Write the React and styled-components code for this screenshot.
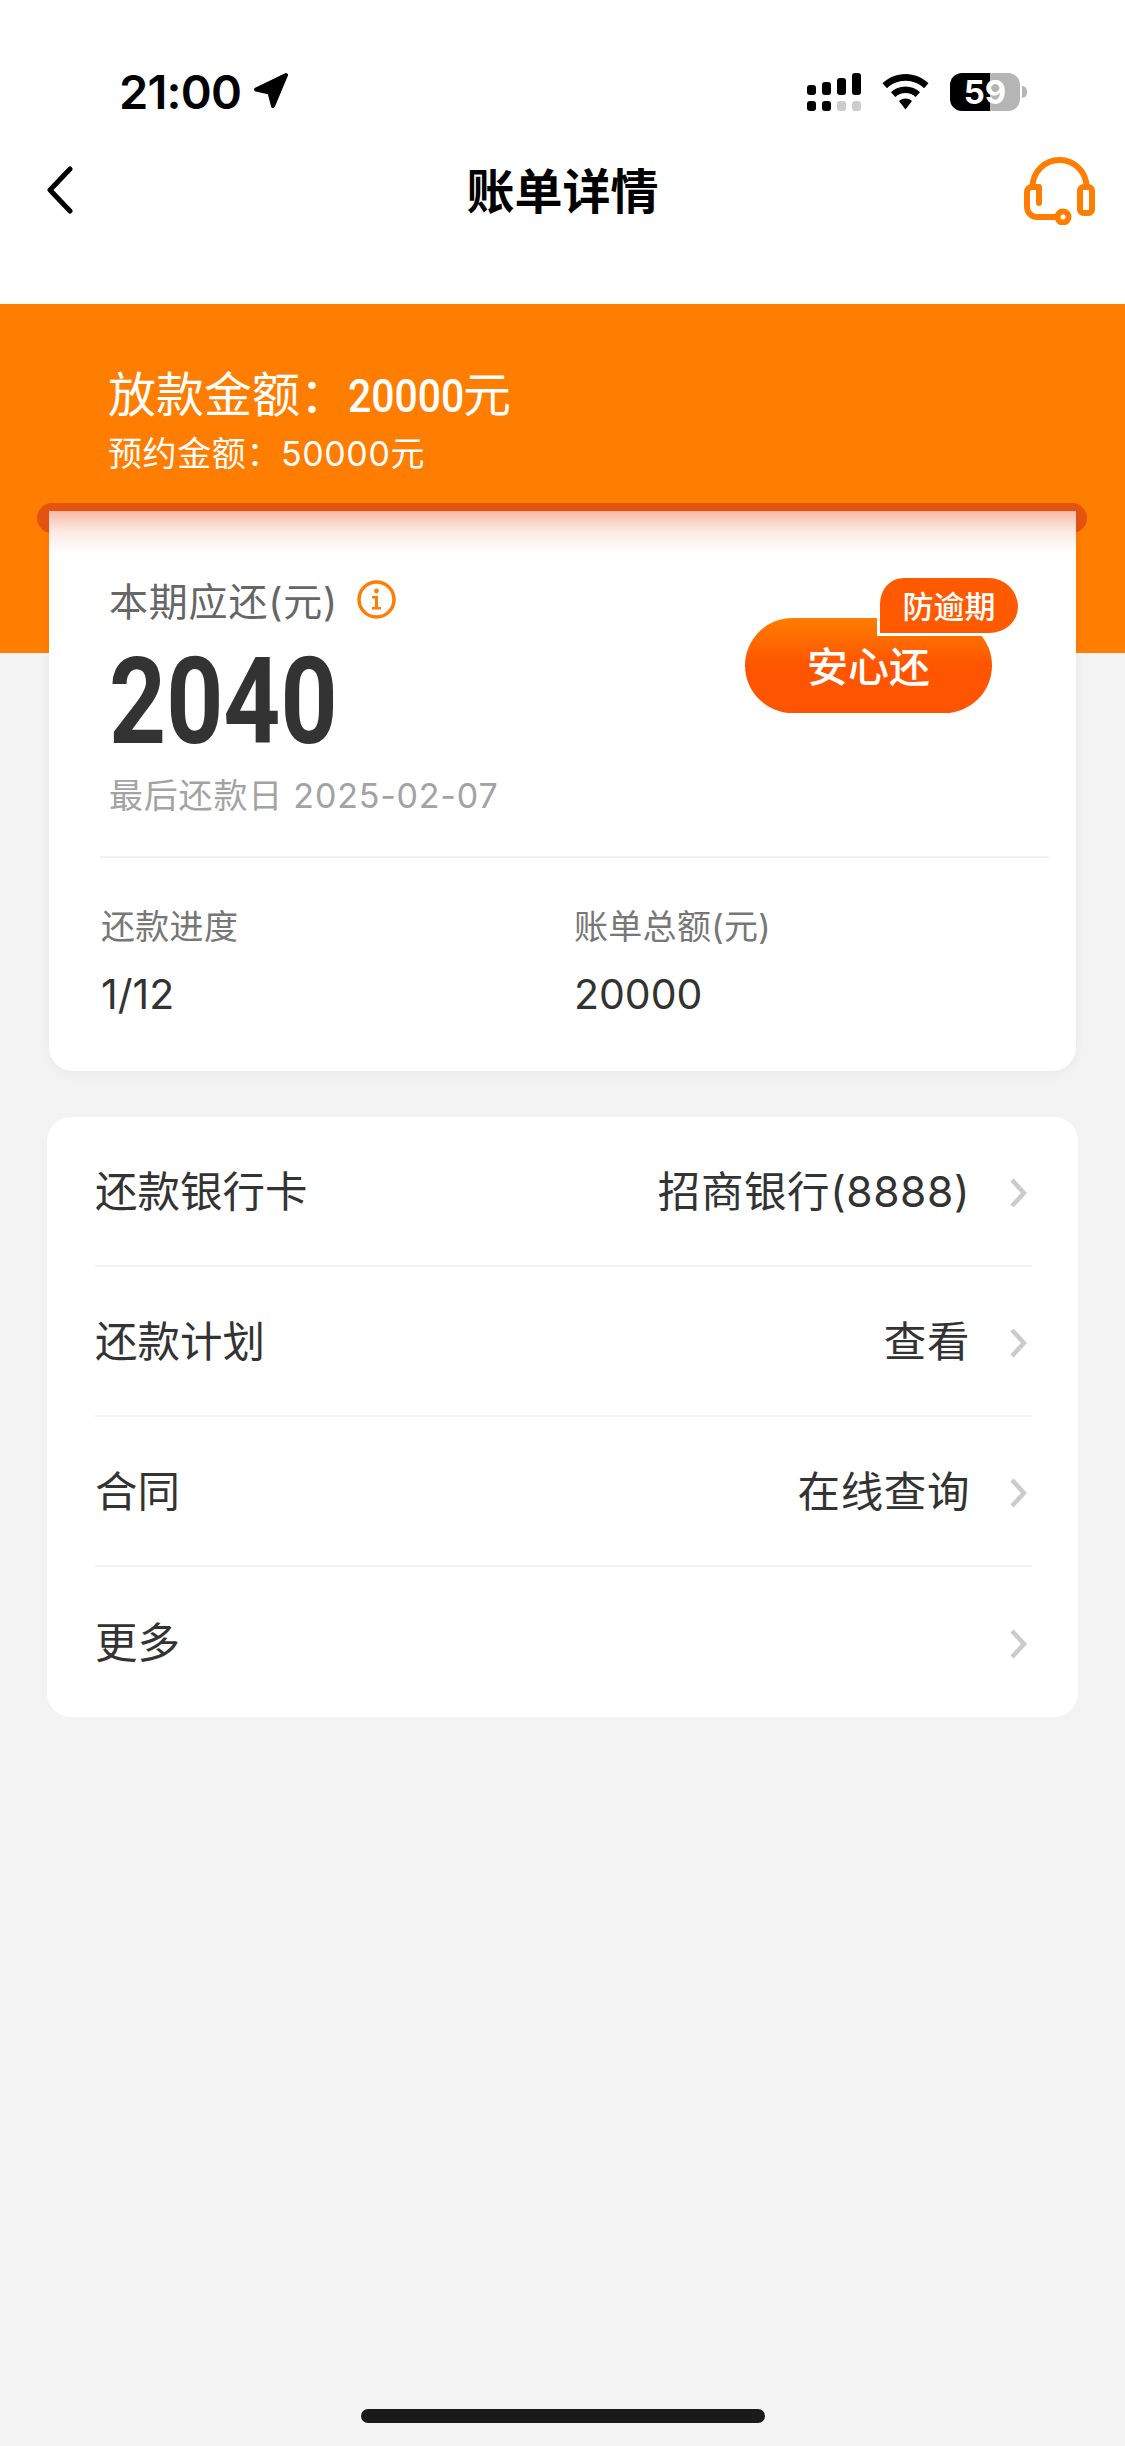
import styled, { createGlobalStyle } from "styled-components";

const SANS = `"Inter", "Noto Sans CJK SC", "Noto Sans", sans-serif`;
const NUMBER = `"Roboto", "Noto Sans CJK SC", sans-serif`;

const GlobalStyle = createGlobalStyle`
  html, body {
    margin: 0;
    padding: 0;
    background: #f3f3f3;
  }
  * { box-sizing: border-box; }
`;

const rows = [
  { label: "还款银行卡", value: "招商银行(8888)" },
  { label: "还款计划", value: "查看" },
  { label: "合同", value: "在线查询" },
  { label: "更多", value: "" },
];

const SignalIcon = () => (
  <svg width="54" height="38" viewBox="0 0 54 38">
    <g fill="#000">
      <rect x="0" y="12" width="9" height="10" rx="3" />
      <rect x="15" y="9" width="9" height="13" rx="3" />
      <rect x="30" y="5" width="9" height="17" rx="3" />
      <rect x="45" y="0" width="9" height="22" rx="3" />
      <rect x="0" y="28" width="9" height="10" rx="3" />
      <rect x="15" y="28" width="9" height="10" rx="3" />
    </g>
    <g fill="#ccc">
      <rect x="30" y="28" width="9" height="10" rx="3" />
      <rect x="45" y="28" width="9" height="10" rx="3" />
    </g>
  </svg>
);

const WifiIcon = () => (
  <svg width="47" height="36" viewBox="0 0 47 36">
    <path d="M23.5 0C14.5 0 6.5 3.5 0.5 9.3L5 14.2C9.8 9.6 16.3 6.8 23.5 6.8S37.2 9.6 42 14.2L46.5 9.3C40.5 3.5 32.5 0 23.5 0Z" fill="#000" />
    <path d="M23.5 12.5C17.8 12.5 12.7 14.7 9 18.3L13.4 23C16 20.5 19.6 19 23.5 19S31 20.5 33.6 23L38 18.3C34.3 14.7 29.2 12.5 23.5 12.5Z" fill="#000" />
    <path d="M23.5 24.5C21 24.5 18.7 25.4 17 27L23.5 35.5L30 27C28.3 25.4 26 24.5 23.5 24.5Z" fill="#000" />
  </svg>
);

const ArrowIcon = () => (
  <svg width="36" height="36" viewBox="0 0 36 36">
    <path d="M33 2L3 16.5L16.5 19.5L20 33Z" fill="#000" stroke="#000" strokeWidth="4" strokeLinejoin="round" />
  </svg>
);

const BackIcon = () => (
  <svg width="26" height="48" viewBox="0 0 26 48">
    <path d="M23 3L3 24L23 45" fill="none" stroke="#000" strokeWidth="5" strokeLinecap="round" strokeLinejoin="round" />
  </svg>
);

const HeadsetIcon = () => (
  <svg width="72" height="70" viewBox="0 -2 72 70">
    <g fill="none" stroke="#ff7d00" strokeWidth="6" strokeLinecap="round" strokeLinejoin="round">
      <path d="M8.5 30A27 27 0 0 1 62.5 30" />
      <path d="M15 46V30H8C5 30 3 32 3 35V50C3 55 7 60 13 60H33" />
      <rect x="56" y="30" width="12" height="26" rx="3.5" />
      <circle cx="39" cy="60" r="5.5" />
    </g>
  </svg>
);

const InfoIcon = () => (
  <svg width="39" height="39" viewBox="0 0 39 39">
    <circle cx="19.5" cy="19.5" r="17.5" fill="none" stroke="#ff7d00" strokeWidth="3.5" />
    <circle cx="19.5" cy="11" r="2.4" fill="#ff7d00" />
    <path d="M15 16H21V27H24V29.5H15V27H18V18.5H15Z" fill="#ff7d00" />
  </svg>
);

const ChevronIcon = () => (
  <svg width="18" height="32" viewBox="0 0 18 32">
    <path d="M3 3L15 16L3 29" fill="none" stroke="#cbcbcb" strokeWidth="4.5" />
  </svg>
);

const App = () => {
  return (
    <Page>
      <GlobalStyle />
      <TopBar>
        <StatusBar>
          <TimeGroup>
            <Time>21:00</Time>
            <ArrowIcon />
          </TimeGroup>
          <StatusIcons>
            <SignalIcon />
            <WifiIcon />
            <Battery>
              <BatteryBody>59</BatteryBody>
              <BatteryNub />
            </Battery>
          </StatusIcons>
        </StatusBar>
        <NavBar>
          <NavLeft>
            <BackIcon />
          </NavLeft>
          <Title>账单详情</Title>
          <NavRight>
            <HeadsetIcon />
          </NavRight>
        </NavBar>
      </TopBar>

      <Banner>
        <LoanLine>
          放款金额：<LoanAmount>20000</LoanAmount>元
        </LoanLine>
        <ReserveLine>预约金额：50000元</ReserveLine>
        <Slot />
      </Banner>

      <BillCard>
        <BillTop>
          <BillInfo>
            <DueLabel>
              本期应还(元)
              <InfoIcon />
            </DueLabel>
            <DueAmount>2040</DueAmount>
            <DueDate>最后还款日 2025-02-07</DueDate>
          </BillInfo>
          <PayButton>
            安心还
            <PayBadge>防逾期</PayBadge>
          </PayButton>
        </BillTop>
        <Divider />
        <Stats>
          <Stat>
            <StatLabel>还款进度</StatLabel>
            <StatValue>1/12</StatValue>
          </Stat>
          <Stat>
            <StatLabel>账单总额(元)</StatLabel>
            <StatValue>20000</StatValue>
          </Stat>
        </Stats>
      </BillCard>

      <ListCard>
        {rows.map((row) => (
          <Row key={row.label}>
            <RowLabel>{row.label}</RowLabel>
            <RowValue>{row.value}</RowValue>
            <RowChevron>
              <ChevronIcon />
            </RowChevron>
          </Row>
        ))}
      </ListCard>

      <HomeBar />
    </Page>
  );
};

const Page = styled.div`
  position: relative;
  width: 1125px;
  height: 2446px;
  overflow: hidden;
  background: #f3f3f3;
  font-family: ${SANS};
`;

const TopBar = styled.header`
  height: 304px;
  background: #fff;
`;

const StatusBar = styled.div`
  display: flex;
  justify-content: space-between;
  align-items: center;
  height: 128px;
  padding: 54px 98px 0 119px;
`;

const TimeGroup = styled.div`
  display: flex;
  align-items: center;
  gap: 12px;
`;

const Time = styled.span`
  font-size: 47px;
  font-weight: 600;
  letter-spacing: -0.8px;
  color: #000;
`;

const StatusIcons = styled.div`
  display: flex;
  align-items: center;
  gap: 21px;
  padding-top: 2px;
`;

const Battery = styled.div`
  display: flex;
  align-items: center;
  gap: 2px;
`;

const BatteryBody = styled.div`
  width: 70px;
  height: 38px;
  border-radius: 12px;
  background: linear-gradient(90deg, #000 0 57%, #b5b5b5 57% 100%);
  color: #fff;
  font-size: 33px;
  font-weight: 700;
  line-height: 38px;
  text-align: center;
`;

const BatteryNub = styled.div`
  width: 5px;
  height: 12px;
  border-radius: 0 5px 5px 0;
  background: #b5b5b5;
`;

const NavBar = styled.nav`
  display: grid;
  grid-template-columns: 1fr auto 1fr;
  align-items: center;
  height: 70px;
  margin-top: 25px;
  padding: 0 29px;
`;

const NavLeft = styled.div`
  display: flex;
  padding-left: 18px;
`;

const NavRight = styled.div`
  display: flex;
  justify-content: flex-end;
`;

const Title = styled.h1`
  margin: 0 0 4px;
  font-size: 48px;
  font-weight: 600;
  color: #000;
`;

const Banner = styled.section`
  position: relative;
  height: 349px;
  padding: 59px 0 0 108px;
  background: #ff7d00;
  color: #fff;
`;

const LoanLine = styled.div`
  height: 68px;
  font-size: 48px;
  line-height: 64px;
`;

const LoanAmount = styled.span`
  display: inline-block;
  width: 115px;
  font-family: ${NUMBER};
  font-size: 46px;
  font-weight: 500;
  transform: scaleX(0.89);
  transform-origin: left center;
`;

const ReserveLine = styled.div`
  font-size: 34px;
  line-height: 46px;
  letter-spacing: 0.6px;
`;

const Slot = styled.div`
  position: absolute;
  top: 199px;
  left: 37px;
  width: 1050px;
  height: 30px;
  border-radius: 15px;
  background: #e4530f;
`;

const BillCard = styled.section`
  position: relative;
  width: 1027px;
  height: 560px;
  margin: -142px 0 0 49px;
  border-radius: 0 0 24px 24px;
  background: linear-gradient(180deg, #f6b9a6 0, #fde9e2 20px, #fff 42px, #fff 100%);
  box-shadow: 0 4px 12px rgba(0, 0, 0, 0.04);
`;

const BillTop = styled.div`
  display: flex;
  justify-content: space-between;
  height: 345px;
  padding: 66px 84px 0 60px;
`;

const BillInfo = styled.div`
  display: flex;
  flex-direction: column;
  align-items: flex-start;
`;

const DueLabel = styled.div`
  display: flex;
  align-items: center;
  gap: 19px;
  height: 44px;
  font-size: 39px;
  letter-spacing: 0.8px;
  color: #666;
`;

const DueAmount = styled.div`
  margin-top: 24px;
  font-family: ${NUMBER};
  font-size: 120px;
  font-weight: 700;
  line-height: 114px;
  color: #333;
  transform: scaleX(0.83);
  transform-origin: left center;
`;

const DueDate = styled.div`
  margin-top: 14px;
  font-size: 34px;
  line-height: 46px;
  letter-spacing: 0.8px;
  color: #a3a3a3;
`;

const PayButton = styled.button`
  position: relative;
  width: 247px;
  height: 95px;
  margin-top: 41px;
  padding: 0 0 4px;
  border: 0;
  border-radius: 48px;
  background: linear-gradient(180deg, #ff7d00 0, #ff5500 50%, #ff5500 100%);
  color: #fff;
  font-family: ${SANS};
  font-size: 41px;
  font-weight: 500;
`;

const PayBadge = styled.span`
  position: absolute;
  top: -40px;
  left: 132px;
  display: flex;
  align-items: center;
  justify-content: center;
  width: 141px;
  height: 58px;
  padding: 0 0 2px;
  border-left: 3px solid #fff;
  border-bottom: 3px solid #fff;
  border-radius: 26px 29px 29px 0;
  background: #ff5a00;
  font-size: 31px;
  font-weight: 500;
  white-space: nowrap;
`;

const Divider = styled.div`
  height: 2px;
  margin: 0 27px 0 51px;
  background: #f1f1f4;
`;

const Stats = styled.div`
  display: grid;
  grid-template-columns: 473px 1fr;
  padding: 45px 0 0 52px;
`;

const Stat = styled.div`
  display: flex;
  flex-direction: column;
`;

const StatLabel = styled.div`
  font-size: 34px;
  line-height: 48px;
  letter-spacing: 0.3px;
  color: #777;
`;

const StatValue = styled.div`
  margin-top: 18px;
  font-size: 41px;
  line-height: 50px;
  color: #333;
`;

const ListCard = styled.section`
  width: 1031px;
  margin: 46px 0 0 47px;
  padding: 0 46px 0 48px;
  border-radius: 24px;
  background: #fff;
`;

const Row = styled.div`
  display: flex;
  align-items: center;
  height: 150px;
  border-bottom: 2px solid #f3f3f3;

  &:last-child {
    border-bottom: 0;
  }
`;

const RowLabel = styled.span`
  flex: 1;
  margin-bottom: 5px;
  font-size: 42.5px;
  color: #333;
`;

const RowValue = styled.span`
  margin: 0 39px 5px 0;
  font-size: 42.5px;
  letter-spacing: 0.6px;
  color: #333;
`;

const RowChevron = styled.span`
  display: flex;
  margin: 3px 5px 0 0;
`;

const HomeBar = styled.div`
  position: absolute;
  left: 361px;
  bottom: 23px;
  width: 404px;
  height: 14px;
  border-radius: 7px;
  background: #1a1a1a;
`;

export default App;
